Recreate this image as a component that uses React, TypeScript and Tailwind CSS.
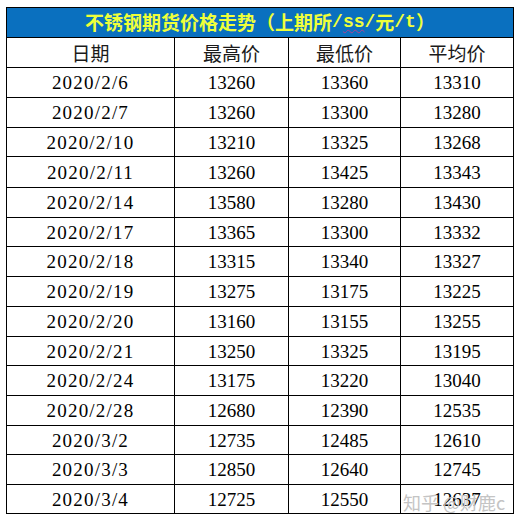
import React from "react";

const rows: [string, string, string, string][] = [
  ["2020/2/6", "13260", "13360", "13310"],
  ["2020/2/7", "13260", "13300", "13280"],
  ["2020/2/10", "13210", "13325", "13268"],
  ["2020/2/11", "13260", "13425", "13343"],
  ["2020/2/14", "13580", "13280", "13430"],
  ["2020/2/17", "13365", "13300", "13332"],
  ["2020/2/18", "13315", "13340", "13327"],
  ["2020/2/19", "13275", "13175", "13225"],
  ["2020/2/20", "13160", "13155", "13255"],
  ["2020/2/21", "13250", "13325", "13195"],
  ["2020/2/24", "13175", "13220", "13040"],
  ["2020/2/28", "12680", "12390", "12535"],
  ["2020/3/2", "12735", "12485", "12610"],
  ["2020/3/3", "12850", "12640", "12745"],
  ["2020/3/4", "12725", "12550", "12637"],
];

const heights = ["h-[30px]", "h-[30px]", "h-[29px]", "h-[31px]", "h-[30px]", "h-[29px]", "h-[30px]", "h-[30px]", "h-[30px]", "h-[29px]", "h-[30px]", "h-[30px]", "h-[29px]", "h-[30px]", "h-[29px]"];

const cell = "border-l border-t border-black flex items-center justify-center pt-[2px]";
const cjk = "font-['Noto_Sans_CJK_SC',sans-serif]";
const mono = "font-['Liberation_Mono',monospace]";

export default function App() {
  return (
    <div className="relative w-[523px] h-[525px] bg-white pl-[6px] pt-[7px] text-black font-['Liberation_Serif','Noto_Sans_CJK_SC',serif]">
      <div className="w-[508px] border-r border-b border-black grid grid-cols-[168px_114px_112px_113px]">
        <div className="col-span-4 h-[30px] bg-[#0a70bf] border-l border-t border-black flex items-center justify-center text-[19px] font-bold text-[#eeff3a]">
          <span className={cjk}>不锈钢期货价格走势（上期所</span>
          <span className={`${mono} text-[18px]`}>/</span>
          <span className={`${mono} text-[18px] underline decoration-wavy decoration-[#b04090] decoration-1 underline-offset-2`}>ss</span>
          <span className={`${mono} text-[18px]`}>/</span>
          <span className={cjk}>元</span>
          <span className={`${mono} text-[18px]`}>/t</span>
          <span className={cjk}>）</span>
        </div>
        {["日期", "最高价", "最低价", "平均价"].map((h) => (
          <div key={h} className={`${cell} ${cjk} h-[30px] text-[19px] text-[#1a1a1a]`}>
            {h}
          </div>
        ))}
        {rows.map((r, i) =>
          r.map((v, j) => (
            <div key={`${i}-${j}`} className={`${cell} ${heights[i]} text-[19px] ${j === 0 ? "tracking-[1.2px]" : ""}`}>
              {v}
            </div>
          ))
        )}
      </div>
      <div className={`absolute left-[403px] top-[489px] text-[18px] text-[#c4c4c4] whitespace-nowrap pointer-events-none ${cjk}`}>
        知乎 @财鹿c
      </div>
    </div>
  );
}
